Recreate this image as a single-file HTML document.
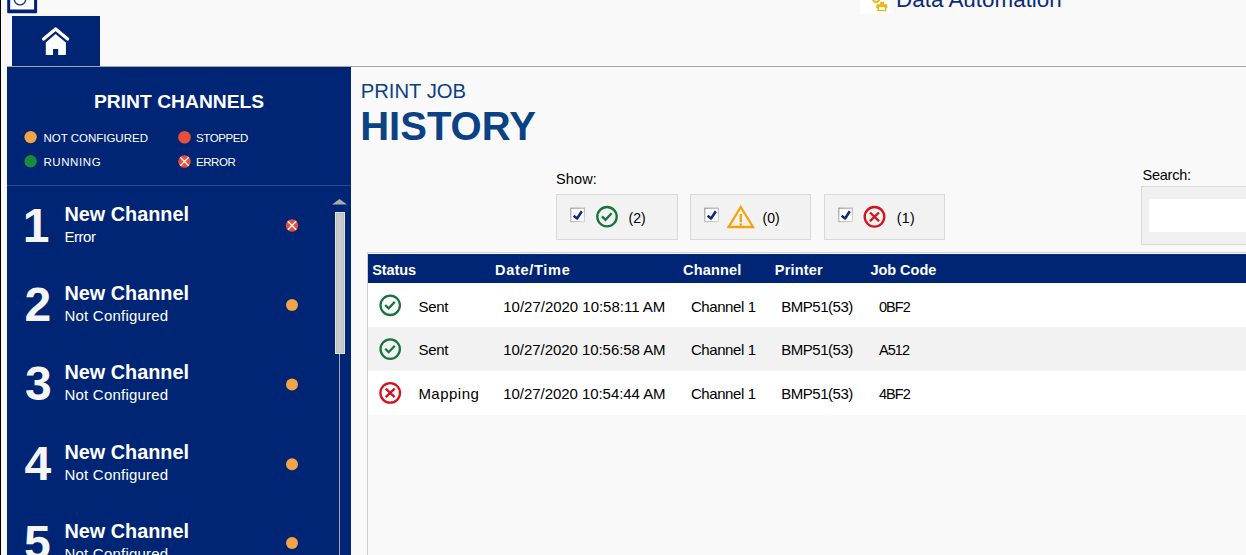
<!DOCTYPE html>
<html><head><meta charset="utf-8">
<style>
html,body{margin:0;padding:0;}
body{width:1246px;height:555px;position:relative;overflow:hidden;background:#f9f9f9;font-family:"Liberation Sans",sans-serif;}
.a{position:absolute;}
.t{position:absolute;white-space:nowrap;line-height:1;}
svg{position:absolute;overflow:visible;}
</style></head><body>
<div class="a" style="left:0;top:0;width:1px;height:555px;background:#000"></div>
<!-- top-left icon -->
<svg style="left:0;top:0" width="50" height="20">
<path d="M7.2,-20 L37.1,-20 L37.1,12.3 Q37.1,13.3 36.1,13.3 L8.2,13.3 Q7.2,13.3 7.2,12.3 Z" fill="#00217a"/>
<rect x="10.2" y="-20" width="23.9" height="29.5" fill="#fff"/>
<circle cx="20" cy="-0.8" r="5.7" fill="none" stroke="#1a3a8a" stroke-width="1.4"/>
</svg>
<!-- top gray line -->
<div class="a" style="left:7px;top:66px;width:1239px;height:1px;background:#a6a6a6"></div>
<!-- home button -->
<div class="a" style="left:12px;top:16px;width:88px;height:50px;background:#002574"></div>
<svg style="left:0;top:0" width="120" height="70">
<polyline points="43.6,39 55.6,28.9 67.6,39" fill="none" stroke="#fff" stroke-width="3.3" stroke-linecap="round" stroke-linejoin="round"/>
<path d="M55.6,34 L65.9,42.6 L65.9,55.1 L58.2,55.1 L58.2,48.9 L53,48.9 L53,55.1 L45.8,55.1 L45.8,42.6 Z" fill="#fff"/>
</svg>
<!-- sidebar -->
<div class="a" style="left:7px;top:67px;width:344px;height:488px;background:#002574"></div>
<div class="a" style="left:7px;top:185px;width:344px;height:1px;background:#2d4a8c"></div>
<svg style="left:0;top:0" width="360" height="555">
<circle cx="30.6" cy="137.1" r="6.2" fill="#f2a546"/>
<circle cx="30.6" cy="161.3" r="6.2" fill="#1a8b3b"/>
<circle cx="184.5" cy="137.2" r="6.3" fill="#e84e3c"/>
<circle cx="184.5" cy="161.5" r="6.3" fill="#e84e3c"/>
<path d="M180.3,157.3 L188.7,165.7 M188.7,157.3 L180.3,165.7" stroke="#fff" stroke-width="1.3"/>
<circle cx="292" cy="225.5" r="6.2" fill="#e84e3c"/>
<path d="M287.8,221.3 L296.2,229.7 M296.2,221.3 L287.8,229.7" stroke="#fff" stroke-width="1.3"/>
<circle cx="292" cy="305.1" r="6" fill="#f2a546"/>
<circle cx="292" cy="384.5" r="6" fill="#f2a546"/>
<circle cx="292" cy="464.3" r="6" fill="#f2a546"/>
<circle cx="292" cy="542.9" r="6" fill="#f2a546"/>
<polygon points="332,204.6 347,204.6 339.5,198.9" fill="#ababab"/>
<rect x="339" y="354" width="1" height="201" fill="#a8a8a8"/>
<rect x="335.5" y="212.5" width="9" height="141" fill="#cacaca" stroke="#e4e4e4" stroke-width="1"/><rect x="336.5" y="213.5" width="7" height="139" fill="none" stroke="#b4b8c8" stroke-width="0.6"/>
</svg>
<!-- filter boxes -->
<div class="a" style="left:556px;top:194px;width:120px;height:44px;border:1px solid #d9d9d9;background:#f2f2f2"></div>
<div class="a" style="left:690px;top:194px;width:119px;height:44px;border:1px solid #d9d9d9;background:#f2f2f2"></div>
<div class="a" style="left:824px;top:194px;width:119px;height:44px;border:1px solid #d9d9d9;background:#f2f2f2"></div>
<!-- search box -->
<div class="a" style="left:1141px;top:186px;width:120px;height:57px;border:1px solid #d9d9d9;background:#f0f0f0"></div>
<div class="a" style="left:1149px;top:199px;width:110px;height:33px;background:#fff"></div>
<!-- table -->
<div class="a" style="left:367px;top:252px;width:879px;height:1px;background:#d0d0d0"></div>
<div class="a" style="left:367px;top:252px;width:1px;height:303px;background:#cfcfcf"></div>
<div class="a" style="left:368px;top:254px;width:878px;height:29px;background:#002574"></div>
<div class="a" style="left:368px;top:283px;width:878px;height:44px;background:#fff"></div>
<div class="a" style="left:368px;top:327px;width:878px;height:44px;background:#f2f2f2"></div>
<div class="a" style="left:368px;top:371px;width:878px;height:44px;background:#fff"></div>
<!-- top right -->
<div class="a" style="left:860px;top:0;width:29.6px;height:13.6px;background:#fff"></div>
<svg style="left:0;top:0" width="1246" height="555">
<circle cx="876.1" cy="-0.9" r="2.9" fill="none" stroke="#e9b60f" stroke-width="2"/>
<rect x="880.2" y="1.8" width="3.8" height="2.6" fill="#e9b60f"/>
<path d="M877.4,4.2 L886.4,4.2 Q887.3,4.2 887.3,5.2 L887.3,8.2 L884.8,8.2 L884.8,7 L879,7 L879,8.2 L876.3,8.2 L876.3,5.2 Q876.3,4.2 877.4,4.2 Z" fill="#e9b60f"/>
<rect x="877.6" y="9.8" width="8.6" height="1.4" fill="#e9b60f"/>
<rect x="877.6" y="7" width="1.4" height="4" fill="#e9b60f"/>
<rect x="884.8" y="7" width="1.4" height="4" fill="#e9b60f"/>
</svg>
<!-- filter icons -->
<svg style="left:0;top:0" width="1246" height="555">
<defs>
<linearGradient id="cbg" x1="0" y1="0" x2="1" y2="1"><stop offset="0" stop-color="#9a9a9a"/><stop offset="1" stop-color="#d8d8d8"/></linearGradient>
<g id="chk">
<rect x="0.6" y="0.6" width="13.6" height="13.4" fill="#fff" stroke="url(#cbg)" stroke-width="1.2"/>
<path d="M3.4,8.2 L6.9,10.9 L11.6,3.6" fill="none" stroke="#0b2a80" stroke-width="2.5" stroke-linejoin="round"/>
</g>
<g id="okc">
<circle cx="0" cy="0" r="9.7" fill="none" stroke="#17743b" stroke-width="2.3"/>
<path d="M-5,-0.3 L-1.5,3.1 L4.6,-3.4" fill="none" stroke="#17743b" stroke-width="2.3"/>
</g>
<g id="errc">
<circle cx="0" cy="0" r="9.8" fill="none" stroke="#d4131c" stroke-width="2.3"/>
<path d="M-4.5,-4.3 L4.5,4.3 M4.5,-4.3 L-4.5,4.3" fill="none" stroke="#d4131c" stroke-width="2.3"/>
</g>
</defs>
<use href="#chk" x="570.2" y="207.6"/>
<use href="#chk" x="704.2" y="207.6"/>
<use href="#chk" x="838.2" y="207.6"/>
<use href="#okc" x="607" y="216.7"/>
<use href="#errc" x="874.5" y="216.8"/>
<polygon points="740.8,207 753,227 728.6,227" fill="none" stroke="#f7a20c" stroke-width="2.3" stroke-linejoin="miter"/>
<rect x="739.6" y="214" width="2.4" height="8.2" fill="#f7a20c"/>
<rect x="739.6" y="223.4" width="2.4" height="2.2" fill="#f7a20c"/>
<use href="#okc" x="390.2" y="305.3"/>
<use href="#okc" x="390.2" y="349.1"/>
<use href="#errc" x="390.2" y="392.9"/>
</svg>
<span class="t" id="pc" style="left:94.00px;top:91.91px;font-size:19.273px;color:#fff;font-weight:bold;">PRINT CHANNELS</span>
<span class="t" id="lg1" style="left:43.40px;top:132.71px;font-size:11.500px;color:#fff;letter-spacing:0.000px;">NOT CONFIGURED</span>
<span class="t" id="lg2" style="left:43.40px;top:156.91px;font-size:11.500px;color:#fff;letter-spacing:0.600px;">RUNNING</span>
<span class="t" id="lg3" style="left:196.00px;top:132.71px;font-size:11.500px;color:#fff;letter-spacing:-0.400px;">STOPPED</span>
<span class="t" id="lg4" style="left:196.00px;top:156.91px;font-size:11.500px;color:#fff;letter-spacing:-0.460px;">ERROR</span>
<span class="t" id="num1" style="left:22.80px;top:202.01px;font-size:48.000px;color:#f5f5f5;font-weight:bold;">1</span>
<span class="t" id="nc1" style="left:64.50px;top:205.01px;font-size:19.838px;color:#fff;font-weight:bold;">New Channel</span>
<span class="t" id="sub1" style="left:64.50px;top:229.01px;font-size:15.000px;color:#fff;letter-spacing:-0.460px;">Error</span>
<span class="t" id="num2" style="left:24.40px;top:281.16px;font-size:48.000px;color:#f5f5f5;font-weight:bold;">2</span>
<span class="t" id="nc2" style="left:64.50px;top:284.16px;font-size:19.838px;color:#fff;font-weight:bold;">New Channel</span>
<span class="t" id="sub2" style="left:64.50px;top:308.15px;font-size:15.000px;color:#fff;letter-spacing:0.215px;">Not Configured</span>
<span class="t" id="num3" style="left:25.00px;top:360.32px;font-size:48.000px;color:#f5f5f5;font-weight:bold;">3</span>
<span class="t" id="nc3" style="left:64.50px;top:363.30px;font-size:19.838px;color:#fff;font-weight:bold;">New Channel</span>
<span class="t" id="sub3" style="left:64.50px;top:387.32px;font-size:15.000px;color:#fff;letter-spacing:0.215px;">Not Configured</span>
<span class="t" id="num4" style="left:24.60px;top:440.46px;font-size:48.000px;color:#f5f5f5;font-weight:bold;">4</span>
<span class="t" id="nc4" style="left:64.50px;top:443.47px;font-size:19.838px;color:#fff;font-weight:bold;">New Channel</span>
<span class="t" id="sub4" style="left:64.50px;top:467.45px;font-size:15.000px;color:#fff;letter-spacing:0.215px;">Not Configured</span>
<span class="t" id="num5" style="left:24.00px;top:518.60px;font-size:48.000px;color:#f5f5f5;font-weight:bold;">5</span>
<span class="t" id="nc5" style="left:64.50px;top:521.60px;font-size:19.838px;color:#fff;font-weight:bold;">New Channel</span>
<span class="t" id="sub5" style="left:64.50px;top:545.61px;font-size:15.000px;color:#fff;letter-spacing:0.215px;">Not Configured</span>
<span class="t" id="pj" style="left:360.70px;top:80.90px;font-size:20.256px;color:#0a4285;">PRINT JOB</span>
<span class="t" id="hist" style="left:360.20px;top:106.00px;font-size:40.039px;color:#0a4285;font-weight:bold;">HISTORY</span>
<span class="t" id="show" style="left:556.10px;top:171.90px;font-size:14.500px;color:#000;letter-spacing:0.100px;">Show:</span>
<span class="t" id="search" style="left:1142.50px;top:167.82px;font-size:14.500px;color:#000;letter-spacing:-0.227px;">Search:</span>
<span class="t" id="c2" style="left:628.50px;top:210.70px;font-size:14.000px;color:#000;">(2)</span>
<span class="t" id="c0" style="left:762.60px;top:210.70px;font-size:14.000px;color:#000;letter-spacing:0.040px;">(0)</span>
<span class="t" id="c1" style="left:896.70px;top:210.70px;font-size:14.000px;color:#000;letter-spacing:0.400px;">(1)</span>
<span class="t" id="hs" style="left:372.20px;top:262.61px;font-size:14.500px;color:#fff;font-weight:bold;letter-spacing:-0.064px;">Status</span>
<span class="t" id="hd" style="left:495.00px;top:262.61px;font-size:14.500px;color:#fff;font-weight:bold;letter-spacing:0.710px;">Date/Time</span>
<span class="t" id="hc" style="left:683.00px;top:262.61px;font-size:14.500px;color:#fff;font-weight:bold;letter-spacing:0.187px;">Channel</span>
<span class="t" id="hp" style="left:774.80px;top:262.61px;font-size:14.500px;color:#fff;font-weight:bold;letter-spacing:0.187px;">Printer</span>
<span class="t" id="hj" style="left:870.40px;top:262.61px;font-size:14.500px;color:#fff;font-weight:bold;letter-spacing:-0.023px;">Job Code</span>
<span class="t" id="rs0" style="left:418.40px;top:298.71px;font-size:15.000px;color:#000;letter-spacing:-0.240px;">Sent</span>
<span class="t" id="rd0" style="left:503.30px;top:298.71px;font-size:15.000px;color:#000;letter-spacing:-0.019px;">10/27/2020 10:58:11 AM</span>
<span class="t" id="rc0" style="left:690.90px;top:298.71px;font-size:15.000px;color:#000;letter-spacing:-0.410px;">Channel 1</span>
<span class="t" id="rp0" style="left:781.20px;top:298.71px;font-size:15.000px;color:#000;letter-spacing:-0.470px;">BMP51(53)</span>
<span class="t" id="rj0" style="left:879.00px;top:299.71px;font-size:14.500px;color:#000;letter-spacing:-0.953px;">0BF2</span>
<span class="t" id="rs1" style="left:418.40px;top:342.01px;font-size:15.000px;color:#000;letter-spacing:-0.240px;">Sent</span>
<span class="t" id="rd1" style="left:503.30px;top:342.01px;font-size:15.000px;color:#000;letter-spacing:-0.057px;">10/27/2020 10:56:58 AM</span>
<span class="t" id="rc1" style="left:690.90px;top:342.01px;font-size:15.000px;color:#000;letter-spacing:-0.410px;">Channel 1</span>
<span class="t" id="rp1" style="left:781.20px;top:342.01px;font-size:15.000px;color:#000;letter-spacing:-0.470px;">BMP51(53)</span>
<span class="t" id="rj1" style="left:879.00px;top:343.01px;font-size:14.500px;color:#000;letter-spacing:-0.953px;">A512</span>
<span class="t" id="rs2" style="left:418.40px;top:386.40px;font-size:15.000px;color:#000;letter-spacing:0.480px;">Mapping</span>
<span class="t" id="rd2" style="left:503.30px;top:386.40px;font-size:15.000px;color:#000;letter-spacing:-0.057px;">10/27/2020 10:54:44 AM</span>
<span class="t" id="rc2" style="left:690.90px;top:386.40px;font-size:15.000px;color:#000;letter-spacing:-0.410px;">Channel 1</span>
<span class="t" id="rp2" style="left:781.20px;top:386.40px;font-size:15.000px;color:#000;letter-spacing:-0.470px;">BMP51(53)</span>
<span class="t" id="rj2" style="left:879.00px;top:387.40px;font-size:14.500px;color:#000;letter-spacing:-0.953px;">4BF2</span>
<span class="t" id="da" style="left:896.10px;top:-10.81px;font-size:22.419px;color:#0a2a7a;">Data Automation</span>
</body></html>
